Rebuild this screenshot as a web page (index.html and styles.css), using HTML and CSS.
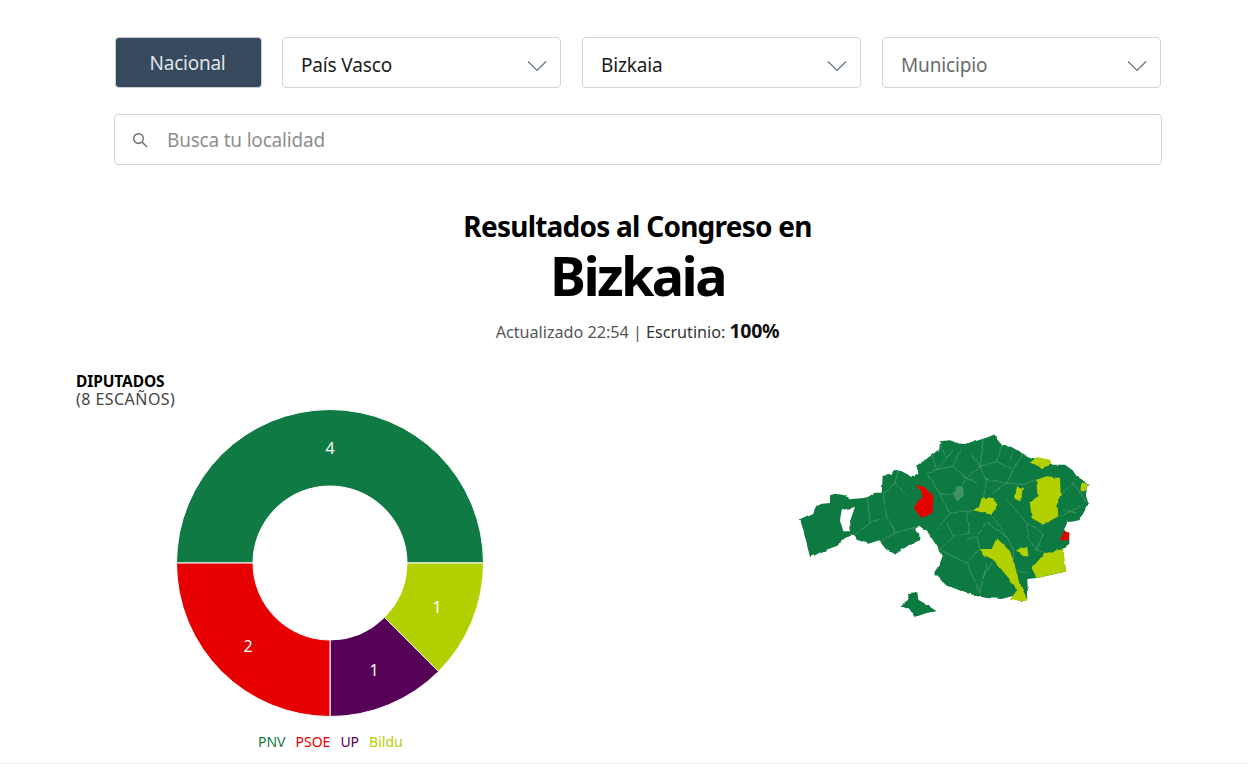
FILE: index.html
```html
<!DOCTYPE html>
<html lang="es">
<head>
<meta charset="utf-8">
<title>Resultados al Congreso en Bizkaia</title>
<link rel="stylesheet" href="styles.css">
</head>
<body>
<main class="page">
  <section class="filters">
    <div class="filter-row">
      <button class="btn-national">Nacional</button>
      <div class="select"><span>País Vasco</span><svg class="chev" viewBox="0 0 20 12"><path d="M1 1.5 10 10.5 19 1.5"/></svg></div>
      <div class="select"><span>Bizkaia</span><svg class="chev" viewBox="0 0 20 12"><path d="M1 1.5 10 10.5 19 1.5"/></svg></div>
      <div class="select muted"><span>Municipio</span><svg class="chev" viewBox="0 0 20 12"><path d="M1 1.5 10 10.5 19 1.5"/></svg></div>
    </div>
    <div class="search">
      <svg class="lens" viewBox="0 0 16 16"><circle cx="6.5" cy="6.5" r="4.8"/><path d="M10 10 15 15"/></svg>
      <span>Busca tu localidad</span>
    </div>
  </section>

  <header class="heading">
    <h2>Resultados al Congreso en</h2>
    <h1>Bizkaia</h1>
    <p>Actualizado 22:54 | <span class="dark">Escrutinio:</span> <strong>100%</strong></p>
  </header>

  <section class="results">
    <div class="seats">
      <div class="seats-title"><strong>DIPUTADOS</strong><br>(8 ESCAÑOS)</div>
      <svg class="donut" viewBox="-155 -155 310 310">
        <path class="pnv" d="M-153.5 0A153.5 153.5 0 0 1 153.5 0H77A77 77 0 0 0 -77 0Z"/>
        <path class="bildu" d="M153.5 0A153.5 153.5 0 0 1 108.5 108.5L54.4 54.4A77 77 0 0 0 77 0Z"/>
        <path class="up" d="M108.5 108.5A153.5 153.5 0 0 1 0 153.5V77A77 77 0 0 0 54.4 54.4Z"/>
        <path class="psoe" d="M0 153.5A153.5 153.5 0 0 1 -153.5 0H-77A77 77 0 0 0 0 77Z"/>
        <text x="0" y="-109.5">4</text>
        <text x="107" y="49.5">1</text>
        <text x="44" y="112.5">1</text>
        <text x="-82" y="88.5">2</text>
      </svg>
      <ul class="legend">
        <li class="t-pnv">PNV</li>
        <li class="t-psoe">PSOE</li>
        <li class="t-up">UP</li>
        <li class="t-bildu">Bildu</li>
      </ul>
    </div>
    <div class="map-wrap">
      <svg class="map" viewBox="0 0 960 600">
        <defs>
          <filter id="rough" x="-5%" y="-5%" width="110%" height="110%">
            <feTurbulence type="fractalNoise" baseFrequency="0.045" numOctaves="2" seed="4"/>
            <feDisplacementMap in="SourceGraphic" scale="9" xChannelSelector="R" yChannelSelector="G"/>
            <feGaussianBlur stdDeviation="0.9"/>
          </filter>
        </defs>
        <g filter="url(#rough)">
          <path class="m-green" fill-rule="evenodd" d="M60 288 72 283 100 270 108 250 120 243 150 240 150 217 165 212 190 216 215 228 250 225 262 222 285 212 305 212 308 158 335 155 345 140 365 145 385 155 405 160 415 152 408 128 430 115 452 98 478 78 480 55 510 52 540 62 570 60 600 50 625 42 648 32 652 50 668 68 695 72 720 88 750 102 770 108 812 125 855 125 878 142 890 160 925 182 915 210 925 240 915 262 898 292 862 298 852 322 868 330 868 362 848 378 858 445 815 455 770 465 742 468 745 535 712 532 695 520 665 528 620 525 585 518 550 505 500 488 462 450 480 420 488 398 468 365 445 330 418 308 405 318 418 332 418 355 385 368 345 392 320 378 298 352 265 362 235 352 222 335 195 345 172 368 140 380 90 402 78 355 68 315ZM185 262 225 252 210 295 212 325 190 325 180 290Z"/>
          <path class="m-green" d="M385 510 412 508 415 530 445 548 470 565 440 570 405 582 385 558 360 548 385 530Z"/>
          <path class="m-lines" d="M262 222 270 300 225 335M270 300 320 280 345 330 300 355M320 280 310 215 345 180 400 235M345 330 415 310M345 180 355 138M455 95 470 140 520 130 560 165 600 130 610 45M478 55 500 110 470 140 440 150M520 130 540 80M560 165 530 210 480 215 460 180M600 130 650 115 665 65M650 115 700 140 730 90M700 140 680 180 620 170 600 130M680 180 730 185 770 170M620 170 610 225M480 215 510 270 560 265 580 262M510 270 470 320M560 265 570 330 520 340 500 300M635 275 680 340 620 300 590 340 560 350M680 340 700 380M590 340 600 378M520 340 480 380 560 420 600 378M560 420 600 510M620 420 600 510M640 410 605 470M700 380 700 440 740 450M740 340 770 380 790 330 740 300 680 230M770 380 795 390M840 215 880 180 925 245M840 280 900 250M850 260 890 270M745 340 740 300M520 80 500 110M575 95 600 130M440 150 460 180M700 90 690 110M590 180 560 165M640 210 680 180"/>
          <path class="m-pale" d="M530 190 548 190 552 215 530 235 520 215Z"/>
          <path class="m-red" d="M408 185 428 190 460 215 458 270 425 285 402 255 425 225 425 205Z"/>
          <path class="m-red" d="M855 322 868 330 865 352 838 352Z"/>
          <path class="m-lime" d="M752 118 770 102 810 110 815 125 785 135Z"/>
          <path class="m-lime" d="M770 170 800 160 840 165 842 215 832 240 835 280 790 305 755 285 750 240 772 220Z"/>
          <path class="m-lime" d="M712 190 732 195 718 235 702 222Z"/>
          <path class="m-lime" d="M605 225 640 225 652 245 635 275 580 262 598 250Z"/>
          <path class="m-lime" d="M905 178 925 182 915 205 900 205Z"/>
          <path class="m-lime" d="M600 378 635 378 650 345 690 385 705 430 718 480 745 535 690 530 712 500 690 470 665 440 640 410 610 395Z"/>
          <path class="m-lime" d="M708 382 742 372 745 400 730 400Z"/>
          <path class="m-lime" d="M755 435 795 390 850 378 858 445 770 465Z"/>
        </g>
      </svg>
    </div>
  </section>
</main>
</body>
</html>
```
FILE: styles.css
```css
* { box-sizing: border-box; }
html, body { margin: 0; height: 770px; overflow: hidden; background: #fff; }
body { font-family: "Noto Sans", "Open Sans", sans-serif; color: #000; }
.page { height: 764px; border-bottom: 1px solid #eee; }

.filters { padding: 37px 86px 0 114px; }
.filter-row { display: flex; gap: 21px; }
.btn-national {
  flex: 0 0 147px; height: 51px; margin-right: -1px; margin-left: 1px;
  background: #37495d; color: #dfe5ea; border: 1px solid #c9ced3; border-radius: 4px;
  font: 19px "Noto Sans", sans-serif; letter-spacing: -.25px; padding: 0 2px 0 0;
}
.select {
  flex: 0 0 279px; height: 51px; display: flex; align-items: center; justify-content: space-between;
  padding: 4px 13px 0 18px; border: 1px solid #d5d5d5; border-radius: 4px;
  font-size: 19px; letter-spacing: -.15px; color: #1a1a1a;
}
.select.muted { color: #6b6b6b; }
.chev { width: 20px; height: 12px; margin-top: 3px; fill: none; stroke: #66727c; stroke-width: 1.2; }
.search {
  height: 51px; margin-top: 26px; display: flex; align-items: center; gap: 19px;
  padding: 1px 0 0 17px; border: 1px solid #d5d5d5; border-radius: 4px;
  font-size: 19px; letter-spacing: -.2px; color: #8e8e8e;
}
.lens { width: 16px; height: 16px; fill: none; stroke: #6c6c6c; stroke-width: 1.4; }

.heading { margin-top: 43px; text-align: center; padding-left: 27px; }
.heading h2 { margin: 0; font-size: 28px; line-height: 36px; font-weight: 700; letter-spacing: -.76px; }
.heading h1 { margin: 0; font-size: 54px; line-height: 62px; font-weight: 700; letter-spacing: -2.6px; }
.heading p { margin: 13px 0 0; font-size: 16.2px; line-height: 24px; color: #555; letter-spacing: -.02px; }
.heading .dark { color: #333; }
.heading strong { font-size: 19.5px; color: #111; font-weight: 700; letter-spacing: -.3px; }

.results { display: flex; margin-top: 28px; padding-left: 76px; }
.seats { flex: 0 0 510px; }
.seats-title { font-size: 16px; line-height: 18px; color: #444; letter-spacing: .45px; }
.seats-title strong { font-size: 15.5px; color: #000; letter-spacing: -.1px; }
.donut { display: block; width: 310px; height: 310px; margin: 0 0 0 99px; }
.donut path { stroke: #fff; stroke-width: 1; }
.donut text { fill: #fff; font-size: 16px; text-anchor: middle; }
.pnv { fill: #0f7a43; } .psoe { fill: #e60000; } .up { fill: #560058; } .bildu { fill: #b2d000; }
.legend {
  list-style: none; display: flex; gap: 10px; margin: 15px 0 0 182px; padding: 0;
  font-size: 14px; line-height: 18px;
}
.t-pnv { color: #0f7a43; } .t-psoe { color: #e60000; } .t-up { color: #560058; } .t-bildu { color: #b2d000; }

.map-wrap { padding: 51px 0 0 194px; }
.map { display: block; width: 320px; height: 200px; }
.m-green { fill: #0f7a43; }
.m-lines { fill: none; stroke: #6bab89; stroke-width: 2; opacity: .75; }
.m-pale { fill: #3f9368; }
.m-red { fill: #e60000; }
.m-lime { fill: #b2d000; }
```
